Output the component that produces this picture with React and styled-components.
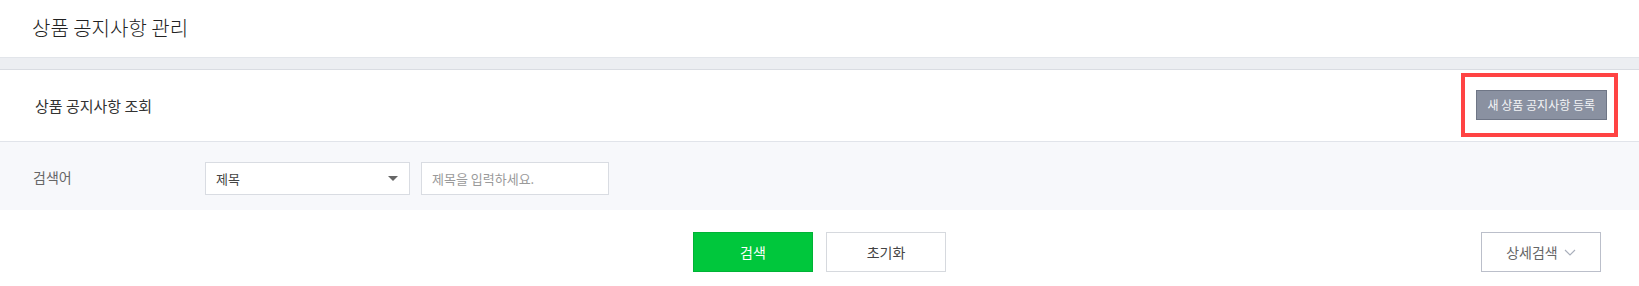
import React, { useState } from 'react'
import styled, { createGlobalStyle } from 'styled-components'

const GlobalStyle = createGlobalStyle`
  html, body {
    margin: 0;
    padding: 0;
    background: #fff;
  }
  body {
    font-family: "Noto Sans CJK KR", "Noto Sans", sans-serif;
    color: #333;
  }
  * { box-sizing: border-box; }
`

function App() {
  const [keyword, setKeyword] = useState('')

  return (
    <Page>
      <GlobalStyle />
      <Header>
        <Title>상품 공지사항 관리</Title>
      </Header>
      <Band />
      <SectionHead>
        <SectionTitle>상품 공지사항 조회</SectionTitle>
        <Highlight>
          <RegisterButton>새 상품 공지사항 등록</RegisterButton>
        </Highlight>
      </SectionHead>
      <SearchRow>
        <Label>검색어</Label>
        <SelectBox>
          <span>제목</span>
          <Caret />
        </SelectBox>
        <TextInput
          placeholder="제목을 입력하세요."
          value={keyword}
          onChange={e => setKeyword(e.target.value)}
        />
      </SearchRow>
      <Footer>
        <span />
        <ButtonGroup>
          <ActionButton primary>검색</ActionButton>
          <ActionButton>초기화</ActionButton>
        </ButtonGroup>
        <RightSlot>
          <DetailButton>
            상세검색
            <svg width="12" height="7" viewBox="0 0 12 7" fill="none">
              <path d="M1 1l5 5 5-5" stroke="#a9afbb" strokeWidth="1.1" />
            </svg>
          </DetailButton>
        </RightSlot>
      </Footer>
    </Page>
  )
}

export default App

const Page = styled.div`
  width: 100%;
  min-height: 286px;
  background: #fff;
`

const Header = styled.div`
  height: 57px;
  display: flex;
  align-items: center;
  padding: 0 0 3px 32px;
`

const Title = styled.h1`
  margin: 0;
  font-size: 20px;
  font-weight: 300;
  color: #222;
`

const Band = styled.div`
  height: 13px;
  background: #eceef2;
  border-top: 1px solid #e2e5ea;
  border-bottom: 1px solid #d9dce2;
`

const SectionHead = styled.div`
  height: 71px;
  display: flex;
  align-items: center;
  justify-content: space-between;
  padding: 0 21px 0 35px;
`

const SectionTitle = styled.h2`
  margin: 0;
  font-size: 15px;
  font-weight: 400;
  color: #333;
`

const Highlight = styled.div`
  border: 4px solid #ff4343;
  padding: 13px 7px 13px 11px;
  margin-top: -2px;
`

const RegisterButton = styled.button`
  height: 30px;
  padding: 0 11px;
  background: #8a91a1;
  border: 1px solid #6f7686;
  color: #f4f5f7;
  font-family: inherit;
  font-size: 12px;
  cursor: pointer;
`

const SearchRow = styled.div`
  display: flex;
  align-items: flex-start;
  padding: 20px 33px 15px;
  background: #f7f8fb;
  border-top: 1px solid #e1e4ea;
`

const Label = styled.div`
  width: 172px;
  height: 33px;
  line-height: 31px;
  font-size: 14px;
  color: #666;
`

const SelectBox = styled.div`
  width: 205px;
  height: 33px;
  display: flex;
  align-items: center;
  justify-content: space-between;
  padding: 0 11px 0 10px;
  background: #fff;
  border: 1px solid #d9dce2;
  font-size: 13px;
  color: #444;
  cursor: pointer;
`

const Caret = styled.i`
  width: 0;
  height: 0;
  border-left: 5px solid transparent;
  border-right: 5px solid transparent;
  border-top: 5px solid #666;
`

const TextInput = styled.input`
  width: 188px;
  height: 33px;
  margin-left: 11px;
  padding: 0 10px;
  background: #fff;
  border: 1px solid #d9dce2;
  font-family: inherit;
  font-size: 13px;
  color: #333;
  outline: none;
  &::placeholder {
    color: #9a9a9a;
  }
`

const Footer = styled.div`
  display: grid;
  grid-template-columns: 1fr auto 1fr;
  align-items: center;
  padding: 22px 38px 15px;
`

const ButtonGroup = styled.div`
  display: flex;
  gap: 13px;
`

const RightSlot = styled.div`
  display: flex;
  justify-content: flex-end;
`

const ActionButton = styled.button`
  width: 120px;
  height: 40px;
  font-family: inherit;
  font-size: 14px;
  cursor: pointer;
  background: ${props => (props.primary ? '#00c73c' : '#fff')};
  color: ${props => (props.primary ? '#fff' : '#444')};
  border: 1px solid ${props => (props.primary ? '#00b336' : '#d6d9de')};
`

const DetailButton = styled.button`
  width: 120px;
  height: 40px;
  display: flex;
  align-items: center;
  justify-content: center;
  gap: 6px;
  background: #fff;
  border: 1px solid #bbbfca;
  color: #666;
  font-family: inherit;
  font-size: 14px;
  cursor: pointer;
  svg {
    margin-top: 1px;
  }
`
